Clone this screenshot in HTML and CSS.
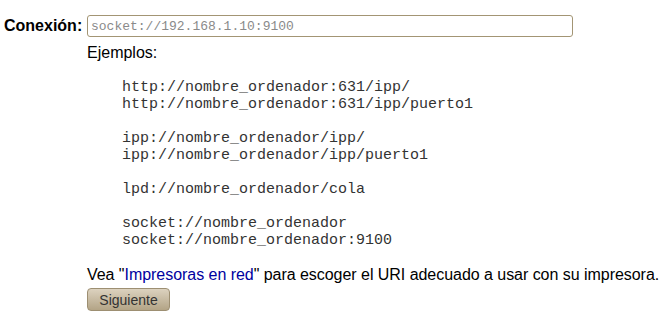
FILE: index.html
```html
<!DOCTYPE html>
<html lang="es">
<head>
    <meta charset="UTF-8">
    <title>Añadir impresora</title>
    <link rel="stylesheet" href="styles.css">
</head>
<body>
    <div class="form">
        <div class="label">Conexión:</div>
        <div class="field">
            <input type="text" class="uri" placeholder="socket://192.168.1.10:9100">
            <div class="ejemplos">Ejemplos:</div>
<pre class="lista">http://nombre_ordenador:631/ipp/
http://nombre_ordenador:631/ipp/puerto1

ipp://nombre_ordenador/ipp/
ipp://nombre_ordenador/ipp/puerto1

lpd://nombre_ordenador/cola

socket://nombre_ordenador
socket://nombre_ordenador:9100</pre>
            <p class="nota">Vea "<a href="#">Impresoras en red</a>" para escoger el URI adecuado a usar con su impresora.</p>
            <button type="button" class="siguiente">Siguiente</button>
        </div>
    </div>
</body>
</html>
```

FILE: styles.css
```css
* {
    margin: 0px;
    padding: 0px;
    box-sizing: border-box;
}

body {
    background: #ffffff;
    color: #000000;
    font-family: "Liberation Sans", Arial, sans-serif;
    font-size: 16px;
    padding: 15px 0px 0px 4px;
}

.form {
    display: flex;
    gap: 7px;
}

.label {
    width: 76px;
    height: 22px;
    line-height: 22px;
    font-weight: bold;
    text-align: right;
}

.field {
    display: flex;
    flex-direction: column;
    align-items: flex-start;
}

.uri {
    width: 486px;
    height: 22px;
    border: 1px solid #a39574;
    border-radius: 3px;
    padding: 0px 3px;
    font-family: "Liberation Mono", monospace;
    font-size: 13px;
    outline: none;
}

.uri::placeholder {
    color: #8a8a8a;
}

.ejemplos {
    margin-top: 7px;
    line-height: 18px;
}

.lista {
    margin: 17px 0px 0px 35px;
    font-family: "Liberation Mono", monospace;
    font-size: 15px;
    line-height: 17px;
    color: #333333;
}

.nota {
    margin-top: 17px;
    line-height: 18px;
    white-space: nowrap;
    letter-spacing: -0.04px;
}

.nota a {
    color: #0000a0;
    text-decoration: none;
}

.siguiente {
    margin-top: 4px;
    width: 83px;
    height: 23px;
    font-family: "Liberation Sans", Arial, sans-serif;
    font-size: 14px;
    color: #333333;
    border: 1px solid #9d8f72;
    border-radius: 4px;
    background: linear-gradient(#dcd2bf, #b3a486);
}
```
